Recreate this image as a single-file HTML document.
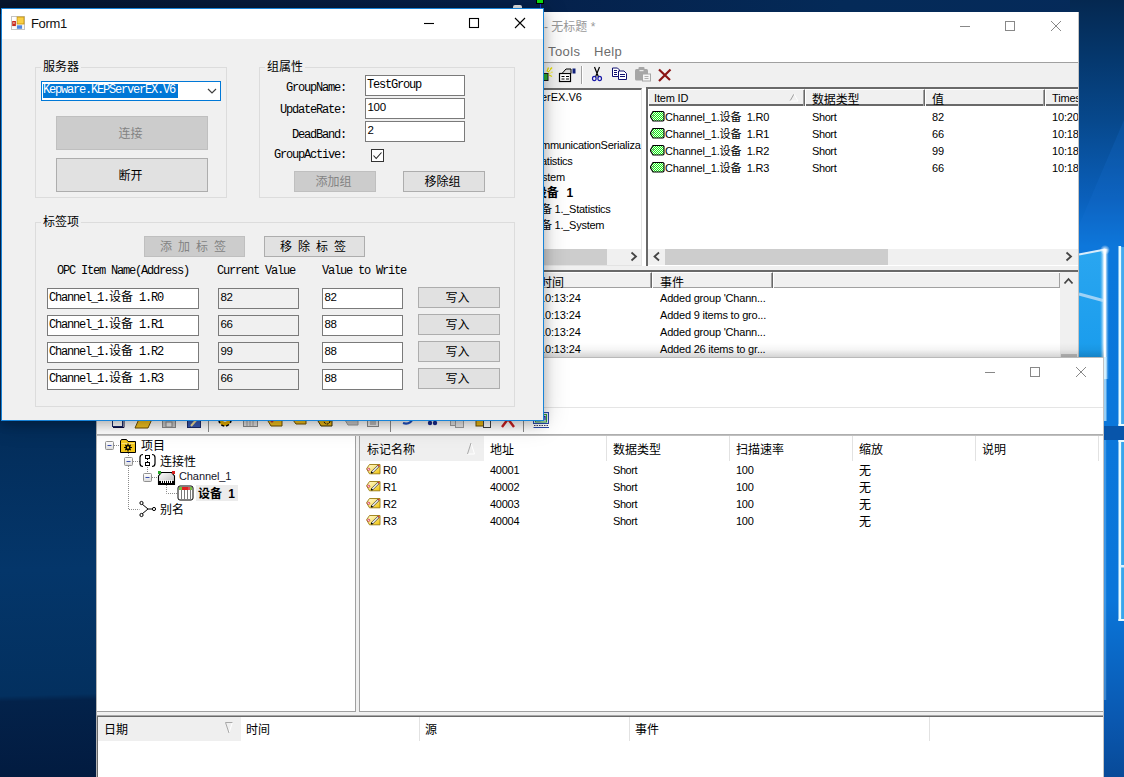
<!DOCTYPE html>
<html lang="zh-CN">
<head>
<meta charset="utf-8">
<title>Form1</title>
<style>
*{box-sizing:border-box;margin:0;padding:0}
html,body{width:1124px;height:777px;overflow:hidden;background:#03295a}
body{position:relative;font:12px "Liberation Sans","Noto Sans CJK SC",sans-serif;color:#000}
.a{position:absolute}
.t{position:absolute;white-space:nowrap;line-height:16px;height:16px}
/* SimSun-like text */
.ss{font:12px "Liberation Mono","Noto Sans CJK SC",monospace;letter-spacing:-1.2px}
.ss b{font-weight:normal;letter-spacing:0}
.ms{font:11px "Liberation Sans","Noto Sans CJK SC",sans-serif}
.ms b{font-weight:normal;font-size:11px}
.cj{font:12px "Liberation Sans","Noto Sans CJK SC",sans-serif}
/* desktop */
#desk-top{left:0;top:0;width:1124px;height:14px;background:linear-gradient(90deg,#07162f 0,#05204a 45%,#042a58 75%,#052a5a 100%)}
#desk-left{left:0;top:400px;width:100px;height:377px;background:linear-gradient(178.500deg,#032a56 0,#032e5c 12%,#04366a 45%,#03305f 78%,#03224a 79.500%,#021b40 100%)}
#desk-right{left:1070px;top:0;width:54px;height:777px;background:linear-gradient(180deg,#052850 0,#05386e 60px,#07488c 120px,#0a60bc 200px,#0a78dc 246px,#0a76da 600px,#0a58b0 720px,#084a98 777px)}
.hc{height:17px;border-top:1px solid #fff;border-left:1px solid #fff;border-right:1px solid #696969;box-shadow:inset -1px 0 0 #a0a0a0}
.vs{width:1px;background:#e2e2e2}
.gb{border:1px solid #dcdcdc}
.gl{background:#f0f0f0;padding:0 2px;font-size:12px;letter-spacing:0}
.btn{padding:1px 3px 0 0;background:#e1e1e1;border:1px solid #adadad;text-align:center;font:12px "Liberation Sans","Noto Sans CJK SC",sans-serif;white-space:nowrap}
.btn.dis{background:#ccc;border-color:#bfbfbf;color:#838383}
.tb{height:21px;background:#fff;border:1px solid #7a7a7a;padding:1px 0 0 1px;line-height:17px;white-space:nowrap;overflow:hidden}
.tb.ro{background:#f0f0f0}
.tb.dg{font:11.500px "Liberation Sans",sans-serif;letter-spacing:-.3px;padding:2px 0 0 1.500px}
</style>
</head>
<body>
<div class="a" id="desk-top"></div>
<div class="a" id="desk-left"></div>
<div class="a" id="desk-right"></div>
<svg class="a" style="left:1070px;top:0" width="54" height="777" viewBox="0 0 54 777">
 <defs>
  <linearGradient id="pn1" x1="0" y1="0" x2="0" y2="1"><stop offset="0" stop-color="#2aa6f0"/><stop offset="1" stop-color="#169aec"/></linearGradient>
  <linearGradient id="vl" x1="0" y1="0" x2="1" y2="0"><stop offset="0" stop-color="#7cc4f4" stop-opacity="0"/><stop offset=".45" stop-color="#fff"/><stop offset=".6" stop-color="#fff"/><stop offset="1" stop-color="#58b0f0" stop-opacity="0"/></linearGradient>
  <radialGradient id="gl"><stop offset="0" stop-color="#fff"/><stop offset="1" stop-color="#fff" stop-opacity="0"/></radialGradient>
 </defs>
 <!-- diagonal light -->
 <path d="M9 225L54 120v140H9z" fill="#1a74d8" opacity=".2"/>
 <!-- first pane -->
 <path d="M9 254L35 249V380H9z" fill="url(#pn1)"/>
 <path d="M9 254.500L35 249.500" stroke="#d8ecfb" stroke-width="2.200"/>
 <path d="M9 294L33 300.500" stroke="#9fd2f6" stroke-width="3"/>
 <rect x="30" y="249" width="9" height="130" fill="url(#vl)"/>
 <circle cx="35" cy="250" r="5" fill="url(#gl)"/>
 <!-- second panes -->
 <rect x="49" y="247" width="5" height="179" fill="#44aaee"/>
 <rect x="48.500" y="246" width="2.600" height="180" fill="#e6fbff"/>
 <rect x="48.500" y="424" width="6" height="2" fill="#e6fbff"/>
 <rect x="49" y="440" width="5" height="181" fill="#38a6ec"/>
 <rect x="48.500" y="440" width="2.600" height="181" fill="#e6fbff"/>
 <rect x="48.500" y="440" width="6" height="2" fill="#e6fbff"/>
 <rect x="48.500" y="619" width="6" height="2" fill="#e6fbff"/>
 <rect x="50" y="565" width="4" height="2.500" fill="#d8f2ff"/>
 <rect x="34" y="426" width="20" height="14" fill="#084a9a" opacity=".75"/>
 <!-- faint beam along window edge -->
 <rect x="34" y="357" width="2.500" height="64" fill="#c8ecff" opacity=".75"/>
 <rect x="34" y="440" width="2.200" height="260" fill="#9fd4fa" opacity=".35"/>
</svg>

<!-- ===== OPC client window (inactive) ===== -->
<div class="a" id="opc" style="left:420px;top:12px;width:659px;height:360px;background:#fff;border-right:1px solid #c4c4c4;overflow:hidden">
 <!-- offsets: page x = 420 + local x ; page y = 12 + local y -->
 <div class="t" style="left:124px;top:7px;color:#999">- 无标题 *</div>
 <!-- caption buttons -->
 <svg class="a" style="left:530px;top:0" width="129" height="30" viewBox="0 0 129 30"><g stroke="#888" stroke-width="1" fill="none"><path d="M10 14.5h10"/><rect x="55.5" y="9.5" width="9" height="9"/><path d="M101 9l10 10M111 9l-10 10"/></g></svg>
 <!-- menu -->
 <div class="t" style="left:128px;top:32px;color:#6d6d6d;font-size:13px;letter-spacing:.4px">Tools</div>
 <div class="t" style="left:174px;top:32px;color:#6d6d6d;font-size:13px;letter-spacing:.3px">Help</div>
 <div class="a" style="left:0;top:50px;width:659px;height:1px;background:#a0a0a0"></div>
 <div class="a" style="left:0;top:51px;width:659px;height:25px;background:#f0f0f0"></div>
 <!-- toolbar icons -->
 <svg class="a" style="left:115px;top:52px" width="140" height="22" viewBox="0 0 140 22">
  <!-- new (partly hidden) -->
  <path d="M13 8l4-4.500M13.500 9.500l4-1.500M12 7.500l1.500-4M14 11l3 1.500" stroke="#e8e000" stroke-width="1.300"/>
  <path d="M13 7l2-2M14 9l2.500-.5" stroke="#fff" stroke-width=".8"/>
  <rect x="6" y="9.500" width="7" height="7" fill="#30b030" stroke="#1a1a1a"/>
  <!-- properties -->
  <rect x="24.500" y="9.500" width="11" height="8" fill="#fff" stroke="#000" stroke-width="1.200"/>
  <path d="M26.500 12.500h3M31 12.500h3M26.500 15h3M31 15h3" stroke="#000"/>
  <path d="M27 9.500l4-4.500h5v4.500z" fill="#d8d8d8" stroke="#000"/>
  <rect x="37.500" y="4.500" width="3" height="5" fill="#10207a"/>
  <!-- separator -->
  <path d="M46.500 2v18" stroke="#a0a0a0"/><path d="M47.500 2v18" stroke="#fff"/>
  <!-- cut -->
  <path d="M59.500 3l4 10M64.500 3l-4 10" stroke="#000" stroke-width="1.200"/>
  <ellipse cx="59.300" cy="14.500" rx="1.800" ry="2.200" fill="none" stroke="#1a1aa8" stroke-width="1.200"/><ellipse cx="64.700" cy="14.500" rx="1.800" ry="2.200" fill="none" stroke="#1a1aa8" stroke-width="1.200"/>
  <!-- copy -->
  <path d="M77.500 4h5l2 2v6.500h-7z" fill="#fff" stroke="#101070"/>
  <path d="M83.500 7h5.500l2.500 2.500v6h-8z" fill="#fff" stroke="#101070"/>
  <path d="M79 6.500h3M79 8.500h3M85 10.500h5M85 12.500h5M79 10.500h3" stroke="#101070"/>
  <!-- paste disabled -->
  <rect x="100" y="5" width="13" height="11.500" rx="1.500" fill="#a6a6a6"/>
  <rect x="103.500" y="3" width="6" height="3.500" rx="1" fill="#a6a6a6"/><rect x="104.500" y="6" width="4" height="1.200" fill="#e8e8e8"/>
  <rect x="107.500" y="10" width="8" height="7" fill="#f4f4f4" stroke="#a6a6a6"/><path d="M109.500 12.500h4M109.500 14.500h4" stroke="#b0b0b0"/>
  <!-- delete -->
  <path d="M124 5.500l11 10.500M135.500 5.500l-11.500 11.500" stroke="#8b1515" stroke-width="2.200"/>
 </svg>
 <!-- tree pane -->
 <div class="a" style="left:60px;top:76px;width:162px;height:178px;background:#fff;border:2px solid #696969;border-right:1px solid #e3e3e3;border-bottom:1px solid #e3e3e3"></div>
 <div class="a ms" style="left:62px;top:78px;width:159px;height:159px;overflow:hidden;letter-spacing:-.25px">
  <div class="t" style="left:59px;top:-1px;letter-spacing:0">erEX.V6</div>
  <div class="t" style="left:59px;top:47px">mmunicationSerializa</div>
  <div class="t" style="left:59px;top:63px">atistics</div>
  <div class="t" style="left:60px;top:79px">stem</div>
  <div class="t" style="left:53px;top:95px;font-weight:bold;font-size:12px;word-spacing:5px">设备 1</div>
  <div class="t" style="left:59px;top:111px"><b>备</b> 1._Statistics</div>
  <div class="t" style="left:59px;top:127px"><b>备</b> 1._System</div>
 </div>
 <!-- tree h-scroll -->
 <div class="a" style="left:62px;top:237px;width:159px;height:16px;background:#f0f0f0"></div>
 <div class="a" style="left:62px;top:237px;width:125px;height:16px;background:#cdcdcd"></div>
 <svg class="a" style="left:209px;top:239px" width="10" height="12"><path d="M2.500 1.500l4.500 4-4.500 4" stroke="#454545" stroke-width="1.800" fill="none"/></svg>
 <!-- list pane -->
 <div class="a" style="left:226px;top:75px;width:432px;height:179px;background:#fff;border-left:2px solid #696969;border-top:2px solid #696969"></div>
 <svg class="a" width="0" height="0"><defs><pattern id="dth" width="2" height="2" patternUnits="userSpaceOnUse"><rect width="2" height="2" fill="#18e818"/><rect width="1" height="1" fill="#e8ffe8"/><rect x="1" y="1" width="1" height="1" fill="#e8ffe8"/></pattern></defs></svg>
 <!-- list header -->
 <div class="a" style="left:228px;top:77px;width:430px;height:17px;background:#f0f0f0;border-bottom:2px solid #696969"></div>
 <div class="a hc" style="left:228px;top:77px;width:157px"></div>
 <div class="a hc" style="left:385px;top:77px;width:120px"></div>
 <div class="a hc" style="left:505px;top:77px;width:120px"></div>
 <div class="a hc" style="left:625px;top:77px;width:60px"></div>
 <div class="ms" style="letter-spacing:-.17px">
  <div class="t" style="left:234px;top:78px">Item ID</div>
  <div class="t cj" style="left:392px;top:78px">数据类型</div>
  <div class="t cj" style="left:512px;top:78px">值</div>
  <div class="t" style="left:632px;top:78px">Times</div>
  <svg class="a" style="left:369px;top:81px" width="10" height="9"><path d="M1 8L5 1" stroke="#a0a0a0" fill="none"/><path d="M5 1l4 7H1" stroke="#fff" fill="none"/></svg>
  <svg class="a" style="left:230px;top:98px" width="15" height="12" viewBox="0 0 15 12"><path d="M.6 5.500L3 1.500h10l1 1v7.500l-1 1h-10L.6 7z" fill="url(#dth)" stroke="#000" stroke-width="1.100"/><circle cx="3.400" cy="6" r=".8" fill="#7a8a7a"/></svg>
  <div class="t" style="left:245px;top:97px;word-spacing:2.500px">Channel_1.<b>设备</b> 1.R0</div>
  <div class="t" style="left:392px;top:97px;letter-spacing:-.4px">Short</div>
  <div class="t" style="left:512px;top:97px">82</div>
  <div class="t" style="left:632px;top:97px">10:20</div>
  <svg class="a" style="left:230px;top:115px" width="15" height="12" viewBox="0 0 15 12"><path d="M.6 5.500L3 1.500h10l1 1v7.500l-1 1h-10L.6 7z" fill="url(#dth)" stroke="#000" stroke-width="1.100"/><circle cx="3.400" cy="6" r=".8" fill="#7a8a7a"/></svg>
  <div class="t" style="left:245px;top:114px;word-spacing:2.500px">Channel_1.<b>设备</b> 1.R1</div>
  <div class="t" style="left:392px;top:114px;letter-spacing:-.4px">Short</div>
  <div class="t" style="left:512px;top:114px">66</div>
  <div class="t" style="left:632px;top:114px">10:18</div>
  <svg class="a" style="left:230px;top:132px" width="15" height="12" viewBox="0 0 15 12"><path d="M.6 5.500L3 1.500h10l1 1v7.500l-1 1h-10L.6 7z" fill="url(#dth)" stroke="#000" stroke-width="1.100"/><circle cx="3.400" cy="6" r=".8" fill="#7a8a7a"/></svg>
  <div class="t" style="left:245px;top:131px;word-spacing:2.500px">Channel_1.<b>设备</b> 1.R2</div>
  <div class="t" style="left:392px;top:131px;letter-spacing:-.4px">Short</div>
  <div class="t" style="left:512px;top:131px">99</div>
  <div class="t" style="left:632px;top:131px">10:18</div>
  <svg class="a" style="left:230px;top:149px" width="15" height="12" viewBox="0 0 15 12"><path d="M.6 5.500L3 1.500h10l1 1v7.500l-1 1h-10L.6 7z" fill="url(#dth)" stroke="#000" stroke-width="1.100"/><circle cx="3.400" cy="6" r=".8" fill="#7a8a7a"/></svg>
  <div class="t" style="left:245px;top:148px;word-spacing:2.500px">Channel_1.<b>设备</b> 1.R3</div>
  <div class="t" style="left:392px;top:148px;letter-spacing:-.4px">Short</div>
  <div class="t" style="left:512px;top:148px">66</div>
  <div class="t" style="left:632px;top:148px">10:18</div>
 </div>
 <!-- list h-scroll -->
 <div class="a" style="left:228px;top:237px;width:430px;height:16px;background:#f0f0f0"></div>
 <div class="a" style="left:245px;top:237px;width:223px;height:16px;background:#cdcdcd"></div>
 <svg class="a" style="left:232px;top:239px" width="10" height="12"><path d="M7 1.500l-4.500 4 4.500 4" stroke="#454545" stroke-width="1.800" fill="none"/></svg>
 <svg class="a" style="left:644px;top:239px" width="10" height="12"><path d="M2.500 1.500l4.500 4-4.500 4" stroke="#454545" stroke-width="1.800" fill="none"/></svg>
 <!-- splitter area -->
 <div class="a" style="left:0;top:254px;width:659px;height:5px;background:#f0f0f0"></div>
 <!-- log pane -->
 <div class="a" style="left:100px;top:258px;width:558px;height:110px;background:#fff;border-top:2px solid #696969"></div>
 <div class="a" style="left:100px;top:260px;width:540px;height:16px;background:#f0f0f0;border-bottom:1px solid #a0a0a0"></div>
 <div class="a hc" style="left:100px;top:260px;width:132px;height:16px"></div>
 <div class="a hc" style="left:232px;top:260px;width:121px;height:16px"></div>
 <div class="a hc" style="left:353px;top:260px;width:287px;height:16px;border-right:none"></div>
 <div class="a" style="left:640px;top:260px;width:18px;height:100px;background:#f0f0f0"></div>
 <svg class="a" style="left:643px;top:264px" width="12" height="10"><path d="M1.500 7.500l4-4.500 4 4.500" stroke="#454545" stroke-width="1.800" fill="none"/></svg>
 <div class="a" style="left:641px;top:342px;width:16px;height:4px;background:#c1c1c1"></div>
 <div class="t cj" style="left:120px;top:261px">时间</div>
 <div class="t cj" style="left:240px;top:261px">事件</div>
 <div class="ms">
  <div class="t" style="left:119px;top:278px;letter-spacing:-.15px">10:13:24</div>
  <div class="t" style="left:240px;top:278px;letter-spacing:-.2px">Added group 'Chann...</div>
  <div class="t" style="left:119px;top:295px;letter-spacing:-.15px">10:13:24</div>
  <div class="t" style="left:240px;top:295px;letter-spacing:-.2px">Added 9 items to gro...</div>
  <div class="t" style="left:119px;top:312px;letter-spacing:-.15px">10:13:24</div>
  <div class="t" style="left:240px;top:312px;letter-spacing:-.2px">Added group 'Chann...</div>
  <div class="t" style="left:119px;top:329px;letter-spacing:-.15px">10:13:24</div>
  <div class="t" style="left:240px;top:329px;letter-spacing:-.2px">Added 26 items to gr...</div>
 </div>
</div>
<!--/OPC-->

<!-- ===== KEPServerEX config window (inactive) ===== -->
<div class="a" style="left:90px;top:343px;width:1014px;height:16px;background:linear-gradient(180deg,rgba(0,0,0,0),rgba(0,0,0,.04) 40%,rgba(0,0,0,.2));border-radius:8px 0 0 0"></div>
<div class="a" id="kep" style="left:96px;top:357px;width:1008px;height:420px;background:#fff;border-left:1px solid #b4b4b4;border-right:1px solid #c4c4c4;border-top:1px solid #b9b9b9;overflow:hidden">
 <!-- local: page x = 97 + x ; page y = 358 + y -->
 <svg class="a" style="left:878px;top:0" width="129" height="30" viewBox="0 0 129 30"><g stroke="#888" stroke-width="1" fill="none"><path d="M10 14.5h10"/><rect x="55.5" y="9.5" width="9" height="9"/><path d="M101 9l10 10M111 9l-10 10"/></g></svg>
 <div class="a" style="left:0;top:49px;width:1008px;height:1px;background:#e5e5e5"></div>
 <div class="a" style="left:0;top:50px;width:1008px;height:26px;background:#fff"></div>
 <!-- toolbar icons (bottom parts visible) -->
 <svg class="a" style="left:0;top:54px" width="470" height="22" viewBox="0 0 470 22">
  <rect x="15.500" y="2.500" width="10" height="12" fill="#fff" stroke="#1a2a6a"/><path d="M16 15.500h11v-11" stroke="#101040" fill="none"/>
  <path d="M38 16l4-9h13l-4 9z" fill="#f0c020" stroke="#705000"/>
  <rect x="65.500" y="3.500" width="13" height="12" fill="#c8c8c8" stroke="#8a8a8a"/><rect x="69" y="10" width="6" height="5" fill="#e8e8e8" stroke="#8a8a8a"/>
  <rect x="90.500" y="3.500" width="13" height="12" fill="#3858b0" stroke="#1a2a6a"/><path d="M94 14l7-8" stroke="#f0e0a0" stroke-width="2"/>
  <path d="M111.500 1v19" stroke="#8a8a8a"/>
  <circle cx="128" cy="8" r="6" fill="#e8b000" stroke="#000" stroke-width="1.500" stroke-dasharray="3 2"/><circle cx="128" cy="8" r="2" fill="#fff"/>
  <rect x="146.500" y="3.500" width="14" height="11" fill="#e0e0e0" stroke="#8a8a8a"/><path d="M150 5v9M153 5v9M156 5v9" stroke="#a0a0a0"/>
  <path d="M171 9l3-5h11v10h-11z" fill="#f0c020" stroke="#705000"/><circle cx="175" cy="9" r="1.500" fill="#c03030"/>
  <path d="M196 8l3-5h10v9h-10z" fill="#f0c020" stroke="#705000"/>
  <path d="M221 9l3-5h11v10h-11z" fill="#e8b818" stroke="#403000"/><circle cx="230" cy="9" r="3" fill="none" stroke="#000" stroke-dasharray="2 1"/>
  <path d="M248 8l3-5h10v10h-10z" fill="#c8c8c8" stroke="#9a9a9a"/>
  <rect x="270.500" y="3.500" width="11" height="11" fill="#e8e8e8" stroke="#8a8a8a"/><path d="M273 7h6M273 10h6M273 12h6" stroke="#8a8a8a"/>
  <path d="M293.500 1v19" stroke="#8a8a8a"/>
  <path d="M306 11c6 2 10-2 11-7" stroke="#2050c0" stroke-width="2.200" fill="none"/>
  <circle cx="333" cy="11" r="2.200" fill="#1a2a8a"/><circle cx="338" cy="11" r="2.200" fill="#1a2a8a"/>
  <rect x="353.500" y="6.500" width="8" height="7" fill="#e0e0e0" stroke="#a0a0a0"/><rect x="358.500" y="8.500" width="8" height="7" fill="#e8e8e8" stroke="#a0a0a0"/>
  <rect x="379" y="4" width="11" height="10" fill="#e8b818" stroke="#705000"/><rect x="386.500" y="7.500" width="7" height="8" fill="#fff" stroke="#404040"/>
  <path d="M405 15l6-8 6 8" stroke="#c82020" stroke-width="2.400" fill="none"/>
  <path d="M426.500 1v19" stroke="#8a8a8a"/>
  <rect x="436.500" y="0.500" width="15" height="11" fill="#dfe8ff" stroke="#2a48a8"/><rect x="438.500" y="2.500" width="11" height="7.500" fill="#fff" stroke="#30a030"/><path d="M440 4.500h3v4h-3zM445 4.500h3v4" stroke="#1a2a9a" fill="none" stroke-width="1.300"/><path d="M437 13.500h15" stroke="#404060" stroke-dasharray="1.500 1"/><path d="M436.500 15.500h15.500" stroke="#2a48a8"/>
 </svg>
 <div class="a" style="left:0;top:76px;width:1008px;height:2px;background:linear-gradient(180deg,#a6a6a6,#c8c8c8)"></div>
 <!-- panes bg -->
 <div class="a" style="left:0;top:78px;width:1008px;height:282px;background:#f0f0f0"></div>
 <div class="a" style="left:0;top:78px;width:259px;height:276px;background:#fff;border-right:1px solid #a0a0a0;border-bottom:1px solid #a0a0a0"></div>
 <div class="a" style="left:262px;top:78px;width:744px;height:276px;background:#fff;border-left:1px solid #a0a0a0;border-bottom:1px solid #a0a0a0"></div>
 <!-- tree -->
 <svg class="a" style="left:0;top:78px" width="200" height="90" viewBox="0 0 200 90">
  <defs><linearGradient id="tgy" x1="0" y1="0" x2="1" y2="1"><stop offset="0" stop-color="#fffbd8"/><stop offset=".45" stop-color="#fbe98a"/><stop offset="1" stop-color="#efc000"/></linearGradient><linearGradient id="gch" x1="0" y1="0" x2="1" y2="1"><stop offset="0" stop-color="#fff"/><stop offset="1" stop-color="#b8b8b8"/></linearGradient>
  <linearGradient id="gbx" x1="0" y1="0" x2="0" y2="1"><stop offset="0" stop-color="#fff"/><stop offset="1" stop-color="#dcdcdc"/></linearGradient></defs>
  <g stroke="#8a8a8a" stroke-dasharray="1 1" fill="none"><path d="M17 9.500h6M31.500 17v4M36 25.500h7M31.500 30v43.500h11M50.500 31v6M55 41.500h6M69.500 49v8.500h11"/></g>
  <g fill="url(#gbx)" stroke="#919191"><rect x="8.500" y="5.500" width="8" height="8" rx="1"/><rect x="27.500" y="21.500" width="8" height="8" rx="1"/><rect x="46.500" y="37.500" width="8" height="8" rx="1"/></g>
  <path d="M10.500 9.500h4M29.500 25.500h4M48.500 41.500h4" stroke="#3a4fb0"/>
  <!-- project folder -->
  <path d="M23.500 16.500v-11.500l1-1.500h5l1.500 2h7.500v11z" fill="#f2c61c" stroke="#000"/><path d="M24.500 7.500h13" stroke="#fbe27a"/>
  <circle cx="31" cy="11.500" r="2.600" fill="#000"/><path d="M31 7.600v7.800M27.100 11.500h7.800M28.300 8.800l5.400 5.400M33.700 8.800l-5.400 5.400" stroke="#000" stroke-width="1.200"/><rect x="30" y="10.500" width="2" height="2" fill="#f2c61c"/>
  <!-- connectivity -->
  <path d="M46 18.500c-2.500 0-3 1-3 3v6c0 2 .5 3 3 3M55 18.500c2.500 0 3 1 3 3v6c0 2-.5 3-3 3" stroke="#000" stroke-width="1.200" fill="none"/>
  <rect x="48.500" y="19.500" width="4" height="3" fill="#fff" stroke="#000"/><rect x="48.500" y="26.500" width="4" height="3" fill="#fff" stroke="#000"/><path d="M50.500 23v3" stroke="#000" stroke-dasharray="1 1"/>
  <!-- channel -->
  <path d="M61.500 48.500v-8.500l3-3.500h10l3 3.500v8.500z" fill="url(#gch)" stroke="#000" stroke-width="1.100"/><path d="M62 45h15v3.500h-15z" fill="#000"/><path d="M64.500 44v3M66.500 44v3M68.500 44v3M70.500 44v3M72.500 44v3M74.500 44v3" stroke="#fff"/>
  <rect x="61" y="35" width="3" height="3" fill="#28a828"/><rect x="75" y="35" width="3" height="3" fill="#d82020"/>
  <!-- device -->
  <rect x="81" y="50" width="15" height="14" rx="2" fill="#fff" stroke="#000"/><path d="M84.500 54v9M87.500 54v9M90.500 54v9M93.500 54v9" stroke="#7a7a7a"/>
  <path d="M82 51h3v3h-3z" fill="#78c040"/><path d="M85 51h6v3h-6z" fill="#e02020"/><path d="M91 51h2v3h-2z" fill="#e05050"/><path d="M93 51h2v3h-2z" fill="#78c040"/>
  <!-- alias -->
  <g stroke="#000" fill="#fff"><path d="M45 68l6 5-6 5M51 73h5" fill="none"/><circle cx="44.500" cy="67" r="1.600"/><circle cx="44.500" cy="79" r="1.600"/><circle cx="57" cy="73" r="1.600"/></g>
 </svg>
 <div class="t cj" style="left:44px;top:78px">项目</div>
 <div class="t cj" style="left:63px;top:94px">连接性</div>
 <div class="t ms" style="left:82px;top:112px;color:#15152a;letter-spacing:-.1px">Channel_1</div>
 <div class="a" style="left:99px;top:127px;width:42px;height:16px;background:#ececec"></div>
 <div class="t cj" style="left:101px;top:126px;font-weight:bold;word-spacing:3px">设备 1</div>
 <div class="t cj" style="left:63px;top:142px">别名</div>
 <!-- list header -->
 <div class="a" style="left:263px;top:78px;width:124px;height:25px;background:#efefef"></div>
 <svg class="a" style="left:369px;top:84px" width="10" height="13"><path d="M5 1l3.500 11h-7" stroke="#fff" fill="none"/><path d="M1.500 12L5 1" stroke="#a8a8a8" fill="none"/></svg>
 <div class="a vs" style="left:509px;top:78px;height:25px"></div>
 <div class="a vs" style="left:632px;top:78px;height:25px"></div>
 <div class="a vs" style="left:755px;top:78px;height:25px"></div>
 <div class="a vs" style="left:878px;top:78px;height:25px"></div>
 <div class="a vs" style="left:1001px;top:78px;height:25px"></div>
 <div class="cj">
  <div class="t" style="left:270px;top:84px">标记名称</div>
  <div class="t" style="left:393px;top:84px">地址</div>
  <div class="t" style="left:516px;top:84px">数据类型</div>
  <div class="t" style="left:639px;top:84px">扫描速率</div>
  <div class="t" style="left:762px;top:84px">缩放</div>
  <div class="t" style="left:885px;top:84px">说明</div>
 </div>
 <div class="ms" style="letter-spacing:-.27px">
  <svg class="a" style="left:269px;top:106px" width="15" height="11" viewBox="0 0 15 11"><path d="M.5 4.800L3.500.5h10.500v9.300h-10.500z" fill="url(#tgy)" stroke="#9a7a10" stroke-width=".9"/><circle cx="2.700" cy="5.300" r="1.100" fill="#fff" stroke="#d03050" stroke-width=".9"/><path d="M5.700 8.600L12.800 1.600" stroke="#3a3a3a" stroke-width="2.200"/><path d="M6.300 8L12.300 2.100" stroke="#fff" stroke-width="1.200"/><path d="M12.300 2.100l.9-.9" stroke="#e03030" stroke-width="1.600"/><circle cx="5.700" cy="8.600" r=".9" fill="#000"/></svg>
  <div class="t" style="left:286px;top:104px">R0</div>
  <div class="t" style="left:393px;top:104px">40001</div>
  <div class="t" style="left:516px;top:104px;letter-spacing:-.45px">Short</div>
  <div class="t" style="left:639px;top:104px">100</div>
  <div class="t cj" style="left:762px;top:103px">无</div>
  <svg class="a" style="left:269px;top:123px" width="15" height="11" viewBox="0 0 15 11"><path d="M.5 4.800L3.500.5h10.500v9.300h-10.500z" fill="url(#tgy)" stroke="#9a7a10" stroke-width=".9"/><circle cx="2.700" cy="5.300" r="1.100" fill="#fff" stroke="#d03050" stroke-width=".9"/><path d="M5.700 8.600L12.800 1.600" stroke="#3a3a3a" stroke-width="2.200"/><path d="M6.300 8L12.300 2.100" stroke="#fff" stroke-width="1.200"/><path d="M12.300 2.100l.9-.9" stroke="#e03030" stroke-width="1.600"/><circle cx="5.700" cy="8.600" r=".9" fill="#000"/></svg>
  <div class="t" style="left:286px;top:121px">R1</div>
  <div class="t" style="left:393px;top:121px">40002</div>
  <div class="t" style="left:516px;top:121px;letter-spacing:-.45px">Short</div>
  <div class="t" style="left:639px;top:121px">100</div>
  <div class="t cj" style="left:762px;top:120px">无</div>
  <svg class="a" style="left:269px;top:140px" width="15" height="11" viewBox="0 0 15 11"><path d="M.5 4.800L3.500.5h10.500v9.300h-10.500z" fill="url(#tgy)" stroke="#9a7a10" stroke-width=".9"/><circle cx="2.700" cy="5.300" r="1.100" fill="#fff" stroke="#d03050" stroke-width=".9"/><path d="M5.700 8.600L12.800 1.600" stroke="#3a3a3a" stroke-width="2.200"/><path d="M6.300 8L12.300 2.100" stroke="#fff" stroke-width="1.200"/><path d="M12.300 2.100l.9-.9" stroke="#e03030" stroke-width="1.600"/><circle cx="5.700" cy="8.600" r=".9" fill="#000"/></svg>
  <div class="t" style="left:286px;top:138px">R2</div>
  <div class="t" style="left:393px;top:138px">40003</div>
  <div class="t" style="left:516px;top:138px;letter-spacing:-.45px">Short</div>
  <div class="t" style="left:639px;top:138px">100</div>
  <div class="t cj" style="left:762px;top:137px">无</div>
  <svg class="a" style="left:269px;top:157px" width="15" height="11" viewBox="0 0 15 11"><path d="M.5 4.800L3.500.5h10.500v9.300h-10.500z" fill="url(#tgy)" stroke="#9a7a10" stroke-width=".9"/><circle cx="2.700" cy="5.300" r="1.100" fill="#fff" stroke="#d03050" stroke-width=".9"/><path d="M5.700 8.600L12.800 1.600" stroke="#3a3a3a" stroke-width="2.200"/><path d="M6.300 8L12.300 2.100" stroke="#fff" stroke-width="1.200"/><path d="M12.300 2.100l.9-.9" stroke="#e03030" stroke-width="1.600"/><circle cx="5.700" cy="8.600" r=".9" fill="#000"/></svg>
  <div class="t" style="left:286px;top:155px">R3</div>
  <div class="t" style="left:393px;top:155px">40004</div>
  <div class="t" style="left:516px;top:155px;letter-spacing:-.45px">Short</div>
  <div class="t" style="left:639px;top:155px">100</div>
  <div class="t cj" style="left:762px;top:154px">无</div>
 </div>
 <!-- bottom splitter + event pane -->
 <div class="a" style="left:0;top:354px;width:1006px;height:3px;background:#f0f0f0"></div>
 <div class="a" style="left:0;top:357px;width:1006px;height:2px;background:linear-gradient(180deg,#a8a8a8 50%,#696969 50%)"></div>
 <div class="a" style="left:0;top:359px;width:1008px;height:70px;background:#fff;border-left:1px solid #696969"></div>
 <div class="a" style="left:1px;top:359px;width:143px;height:24px;background:#efefef"></div>
 <svg class="a" style="left:127px;top:363px" width="10" height="13"><path d="M8.500 1L5 12" stroke="#fff" fill="none"/><path d="M8.500 1.500h-7L5 12" stroke="#a8a8a8" fill="none"/></svg>
 <div class="a vs" style="left:322px;top:359px;height:24px"></div>
 <div class="a vs" style="left:532px;top:359px;height:24px"></div>
 <div class="a vs" style="left:832px;top:359px;height:24px"></div>
 <div class="cj">
  <div class="t" style="left:7px;top:364px">日期</div>
  <div class="t" style="left:149px;top:364px">时间</div>
  <div class="t" style="left:328px;top:364px">源</div>
  <div class="t" style="left:538px;top:364px">事件</div>
 </div>
</div>
<!--/KEP-->

<!-- tiny desktop remnants above windows -->
<div class="a" style="left:536px;top:-1px;width:8px;height:5px;background:#10e010;border:1px solid #000"></div>
<div class="a" style="left:540px;top:4px;width:1px;height:5px;background:#1030d0"></div>
<div class="a" style="left:513px;top:5px;width:9px;height:4px;background:#e8e8e8;border-radius:2px 2px 0 0"></div>
<!-- ===== Form1 (active window) ===== -->
<div class="a" style="left:1px;top:9px;width:543px;height:412px;box-shadow:0 3px 10px rgba(0,0,0,.2),0 1px 24px rgba(0,0,0,.22);background:transparent"></div>
<div class="a" style="left:1px;top:8px;width:543px;height:413px;background:#f0f0f0;border:1px solid #1883d7"></div>
<div class="a" style="left:2px;top:9px;width:541px;height:30px;background:#fff"></div>
<!-- form icon -->
<svg class="a" style="left:11px;top:16px" width="14" height="14" viewBox="0 0 14 14"><rect x=".5" y=".5" width="13" height="13" fill="#fff" stroke="#c4c4c4"/><rect x="6" y="1" width="7" height="7" fill="#f9cf45" stroke="#c9950f" stroke-width=".9"/><rect x="1.200" y="5" width="3.800" height="5" fill="#c8281c"/><rect x="2.300" y="6" width="1.300" height="2" fill="#f0b0a8"/><rect x="6" y="9.300" width="5" height="3.500" fill="#4f86e0"/><path d="M5.300 1v12M1 10.800h4.300M11.800 9v4" stroke="#e4e4e4" stroke-width=".7"/></svg>
<div class="t" style="left:31px;top:16px;font-size:13px;letter-spacing:-.35px;color:#111">Form1</div>
<svg class="a" style="left:414px;top:9px" width="129" height="30" viewBox="0 0 129 30"><g stroke="#000" stroke-width="1.100" fill="none"><path d="M10 14.500h10"/><rect x="55.500" y="9.500" width="9" height="9"/><path d="M101 9l10 10M111 9l-10 10"/></g></svg>

<!-- group boxes -->
<div class="a gb" style="left:35px;top:67px;width:192px;height:131px"></div>
<div class="t ss gl" style="left:41px;top:57px">服务器</div>
<div class="a gb" style="left:259px;top:67px;width:256px;height:131px"></div>
<div class="t ss gl" style="left:265px;top:57px">组属性</div>
<div class="a gb" style="left:35px;top:222px;width:480px;height:185px"></div>
<div class="t ss gl" style="left:41px;top:212px">标签项</div>

<!-- server combo -->
<div class="a" style="left:41px;top:81px;width:180px;height:20px;background:#fff;border:1px solid #0078d7"></div>
<div class="a" style="left:43px;top:84px;width:135px;height:14px;background:#0078d7"></div>
<div class="t ss" style="left:43px;top:83px;color:#fff">Kepware.KEPServerEX.V6</div>
<svg class="a" style="left:207px;top:88px" width="10" height="7"><path d="M1 1l4 4 4-4" stroke="#404040" stroke-width="1.200" fill="none"/></svg>
<!-- connect buttons -->
<div class="a btn dis" style="left:56px;top:116px;width:152px;height:34px;line-height:32px">连接</div>
<div class="a btn" style="left:56px;top:158px;width:152px;height:34px;line-height:32px">断开</div>

<!-- group props -->
<div class="t ss" style="left:286px;top:81px">GroupName:</div>
<div class="t ss" style="left:280px;top:103px">UpdateRate:</div>
<div class="t ss" style="left:292px;top:128px">DeadBand:</div>
<div class="t ss" style="left:274px;top:148px">GroupActive:</div>
<div class="a tb ss" style="left:365px;top:75px;width:100px">TestGroup</div>
<div class="a tb dg" style="left:365px;top:98px;width:100px">100</div>
<div class="a tb dg" style="left:365px;top:121px;width:100px">2</div>
<div class="a" style="left:371px;top:149px;width:13px;height:13px;background:#fff;border:1px solid #333"></div>
<svg class="a" style="left:371px;top:149px" width="13" height="13"><path d="M2.500 6.500L5.200 9.500L10.500 3.500" stroke="#222" stroke-width="1.100" fill="none"/></svg>
<div class="a btn dis" style="left:294px;top:171px;width:82px;height:21px;line-height:19px">添加组</div>
<div class="a btn" style="left:403px;top:171px;width:82px;height:21px;line-height:19px">移除组</div>

<!-- tags -->
<div class="a btn dis" style="left:144px;top:236px;width:101px;height:21px;line-height:19px;letter-spacing:6px;text-indent:6px">添加标签</div>
<div class="a btn" style="left:264px;top:236px;width:101px;height:21px;line-height:19px;letter-spacing:6px;text-indent:6px">移除标签</div>
<div class="t ss" style="left:57px;top:264px">OPC Item Name(Address)</div>
<div class="t ss" style="left:217px;top:264px">Current Value</div>
<div class="t ss" style="left:322px;top:264px">Value to Write</div>
<div class="a tb ss" style="left:47px;top:288px;width:152px">Channel_1.<b>设备</b> 1.R0</div>
<div class="a tb ro dg" style="left:218px;top:288px;width:81px">82</div>
<div class="a tb dg" style="left:322px;top:288px;width:81px">82</div>
<div class="a btn" style="left:418px;top:287px;width:82px;height:21px;line-height:19px">写入</div>
<div class="a tb ss" style="left:47px;top:315px;width:152px">Channel_1.<b>设备</b> 1.R1</div>
<div class="a tb ro dg" style="left:218px;top:315px;width:81px">66</div>
<div class="a tb dg" style="left:322px;top:315px;width:81px">88</div>
<div class="a btn" style="left:418px;top:314px;width:82px;height:21px;line-height:19px">写入</div>
<div class="a tb ss" style="left:47px;top:342px;width:152px">Channel_1.<b>设备</b> 1.R2</div>
<div class="a tb ro dg" style="left:218px;top:342px;width:81px">99</div>
<div class="a tb dg" style="left:322px;top:342px;width:81px">88</div>
<div class="a btn" style="left:418px;top:341px;width:82px;height:21px;line-height:19px">写入</div>
<div class="a tb ss" style="left:47px;top:369px;width:152px">Channel_1.<b>设备</b> 1.R3</div>
<div class="a tb ro dg" style="left:218px;top:369px;width:81px">66</div>
<div class="a tb dg" style="left:322px;top:369px;width:81px">88</div>
<div class="a btn" style="left:418px;top:368px;width:82px;height:21px;line-height:19px">写入</div>
<!--/FORM-->
</body>
</html>
